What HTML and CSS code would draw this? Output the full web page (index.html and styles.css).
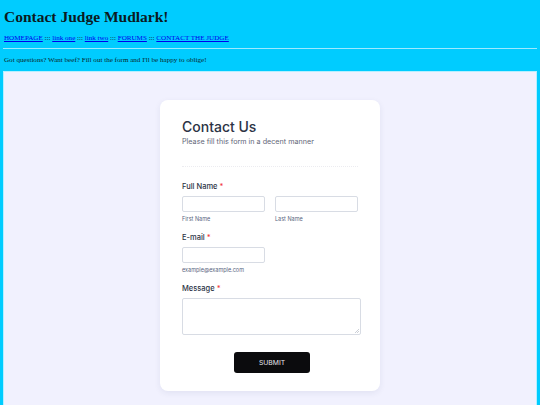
FILE: index.html
```html
<!DOCTYPE html>
<html>
<head>
<meta charset="utf-8">
<link rel="stylesheet" href="styles.css">
</head>
<body>
<h1 class="title">Contact Judge Mudlark!</h1>
<nav class="nav"><a href="#">HOMEPAGE</a> ::: <a href="#">link one</a> ::: <a href="#">link two</a> ::: <a href="#">FORUMS</a> ::: <a href="#">CONTACT THE JUDGE</a></nav>
<hr class="rule">
<p class="intro">Got questions? Want beef? Fill out the form and I'll be happy to oblige!</p>
<div class="frame">
  <form class="card">
    <div class="head">
      <h2 class="card-title">Contact Us</h2>
      <p class="card-sub">Please fill this form in a decent manner</p>
    </div>
    <div class="field">
      <label class="label">Full Name <span class="req">*</span></label>
      <div class="row">
        <div class="col"><div class="input"></div><span class="sub">First Name</span></div>
        <div class="col"><div class="input"></div><span class="sub">Last Name</span></div>
      </div>
    </div>
    <div class="field">
      <label class="label">E-mail <span class="req">*</span></label>
      <div class="col"><div class="input"></div><span class="sub">example@example.com</span></div>
    </div>
    <div class="field">
      <label class="label">Message <span class="req">*</span></label>
      <div class="textarea"><svg class="grip" width="4" height="4" viewBox="0 0 4 4"><path d="M4 0L0 4M4 2L2 4" stroke="#aab0bc" stroke-width="0.6"/></svg></div>
    </div>
    <div class="actions"><button type="button" class="submit">SUBMIT</button></div>
  </form>
</div>
</body>
</html>
```
FILE: styles.css
```css
html, body { margin: 0; padding: 0; overflow: hidden; }
body {
  background: #00ccff;
  font-family: "Liberation Serif", serif;
  color: #0d1b24;
  padding: 0 3px;
  height: 405px;
}
.title {
  font-family: "Liberation Serif", serif;
  font-size: 15.5px;
  font-weight: bold;
  margin: 0;
  padding: 8px 1px 0;
  line-height: 18px;
  color: #0b1a22;
}
.nav {
  font-size: 7.1px;
  margin: 7px 1px 0;
  line-height: 10px;
}
.nav a { color: #0000ee; }
.rule {
  border: 0;
  border-top: 1px solid #9ee9ff;
  margin: 5px 0 0;
  height: 0;
}
.intro {
  font-size: 7.1px;
  margin: 7px 1px 0;
  line-height: 9px;
  color: #0a1f28;
}
.frame {
  margin-top: 6px;
  background: #f1f1fe;
  border: 1px solid #b5f0ff;
  border-bottom: 0;
  height: 336px;
  padding-top: 28px;
  box-sizing: border-box;
  font-family: "Inter", sans-serif;
}
.card {
  width: 220px;
  margin-left: 156px;
  background: #fff;
  border-radius: 8px;
  box-shadow: 0 2px 6px rgba(42, 46, 104, 0.08);
  padding: 18px 22px 18px;
  box-sizing: border-box;
  height: 291px;
}
.head {
  border-bottom: 1px dotted #ececf0;
  padding-bottom: 19px;
  margin-bottom: 15px;
}
.card-title {
  margin: 0;
  font-size: 14px;
  font-weight: 500;
  color: #2c3345;
  line-height: 18px;
}
.card-sub {
  margin: 1px 0 0;
  font-size: 7.2px;
  color: #5f6678;
  line-height: 10px;
}
.field { margin-bottom: 10px; }
.label {
  display: block;
  font-size: 7.5px;
  font-weight: 500;
  color: #2c3345;
  line-height: 10px;
  margin-bottom: 4px;
}
.req { color: #f23a3c; }
.row { display: flex; gap: 10px; }
.col { display: flex; flex-direction: column; }
.input {
  width: 83px;
  height: 16px;
  border: 1px solid #d8dce4;
  border-radius: 2px;
  box-sizing: border-box;
  background: #fff;
}
.sub {
  font-size: 5.5px;
  color: #57647e;
  margin-top: 4px;
  line-height: 7px;
}
.textarea {
  position: relative;
  width: 179px;
  height: 37px;
  border: 1px solid #d8dce4;
  border-radius: 2px;
  box-sizing: border-box;
}
.grip { position: absolute; right: 1px; bottom: 1px; }
.actions {
  display: flex;
  justify-content: center;
  width: 180px;
  padding-top: 7px;
}
.submit {
  width: 76px;
  height: 21px;
  background: #0b0b0d;
  color: #e6e6ea;
  border: 0;
  border-radius: 3px;
  font-family: "Inter", sans-serif;
  font-weight: 400;
  font-size: 6.8px;
}
```
